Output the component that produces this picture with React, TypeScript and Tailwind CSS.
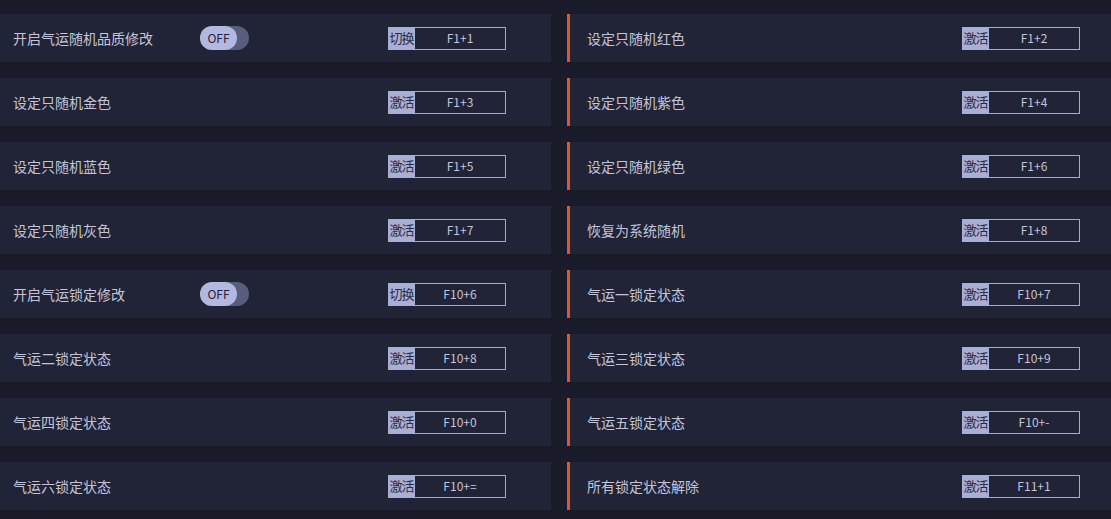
const rows: [string, boolean, string, string, string, string][] = [
  ['开启气运随机品质修改', true, '切换', 'F1+1', '设定只随机红色', 'F1+2'],
  ['设定只随机金色', false, '激活', 'F1+3', '设定只随机紫色', 'F1+4'],
  ['设定只随机蓝色', false, '激活', 'F1+5', '设定只随机绿色', 'F1+6'],
  ['设定只随机灰色', false, '激活', 'F1+7', '恢复为系统随机', 'F1+8'],
  ['开启气运锁定修改', true, '切换', 'F10+6', '气运一锁定状态', 'F10+7'],
  ['气运二锁定状态', false, '激活', 'F10+8', '气运三锁定状态', 'F10+9'],
  ['气运四锁定状态', false, '激活', 'F10+0', '气运五锁定状态', 'F10+-'],
  ['气运六锁定状态', false, '激活', 'F10+=', '所有锁定状态解除', 'F11+1'],
];

function KeyBox({ tag, keys }: { tag: string; keys: string }) {
  return (
    <div className="flex h-[23px] w-[118px] shrink-0">
      <div className="flex w-[27px] items-center justify-center bg-[#a9aed6] text-[13px] tracking-[-1px] text-[#2a2c44]">
        {tag}
      </div>
      <div className="flex flex-1 items-center justify-center border border-l-0 border-[#a7abc6] text-[12px] text-[#c3c6d9]">
        {keys}
      </div>
    </div>
  );
}

function Toggle() {
  return (
    <div className="flex h-[24px] w-[49px] shrink-0 items-center rounded-full bg-[#595d7b]">
      <div className="flex h-[24px] w-[37px] items-center justify-center rounded-full bg-[#b3b8e0] text-[12px] text-[#22243a]">
        OFF
      </div>
    </div>
  );
}

export default function App() {
  return (
    <main
      className="h-[519px] w-[1111px] overflow-hidden bg-[#191b28] pt-[14px]"
      style={{ fontFamily: '"Noto Sans CJK SC", "Noto Sans", sans-serif' }}
    >
      <div className="flex flex-col gap-4">
        {rows.map(([l, tog, tag, k, r, rk]) => (
          <div key={l} className="flex h-12">
            <div className="flex w-[551px] items-center bg-[#212336] pl-[13px] pr-[45px]">
              <span className="w-[187px] text-[14px] text-[#c4c6d8]">{l}</span>
              {tog && <Toggle />}
              <div className="ml-auto">
                <KeyBox tag={tag} keys={k} />
              </div>
            </div>
            <div className="ml-4 flex flex-1 items-center border-l-[3px] border-[#e0552a] bg-[#212336] pl-[17px] pr-[31px]">
              <span className="text-[14px] text-[#c4c6d8]">{r}</span>
              <div className="ml-auto">
                <KeyBox tag="激活" keys={rk} />
              </div>
            </div>
          </div>
        ))}
      </div>
    </main>
  );
}
